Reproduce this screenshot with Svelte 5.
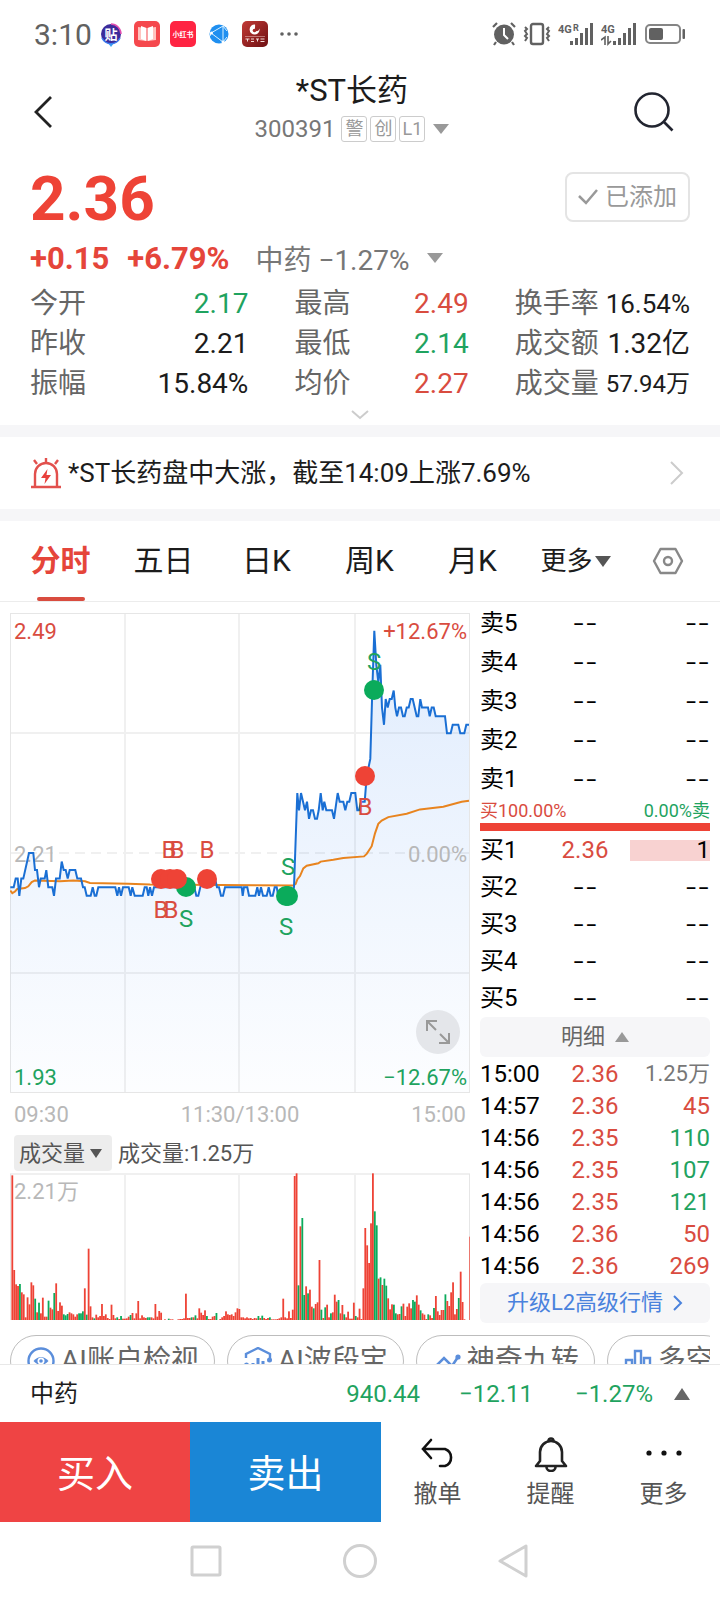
<script lang="ts">
  type Tone = "up" | "down" | "flat" | "muted";

  const stats: { label: string; value: string; tone: Tone; fit?: string }[] = [
    { label: "今开", value: "2.17", tone: "down" },
    { label: "最高", value: "2.49", tone: "up" },
    { label: "换手率", value: "16.54%", tone: "flat", fit: "fit" },
    { label: "昨收", value: "2.21", tone: "flat" },
    { label: "最低", value: "2.14", tone: "down" },
    { label: "成交额", value: "1.32亿", tone: "flat" },
    { label: "振幅", value: "15.84%", tone: "flat" },
    { label: "均价", value: "2.27", tone: "up" },
    { label: "成交量", value: "57.94万", tone: "flat", fit: "fit-more" },
  ];

  const tabs = ["分时", "五日", "日K", "周K", "月K"];
  let activeTab = $state("分时");

  const asks = ["卖5", "卖4", "卖3", "卖2", "卖1"];
  const bids = [
    { label: "买1", price: "2.36", volume: "1" },
    { label: "买2" },
    { label: "买3" },
    { label: "买4" },
    { label: "买5" },
  ];

  const trades: { time: string; price: string; volume: string; tone: Tone }[] = [
    { time: "15:00", price: "2.36", volume: "1.25万", tone: "muted" },
    { time: "14:57", price: "2.36", volume: "45", tone: "up" },
    { time: "14:56", price: "2.35", volume: "110", tone: "down" },
    { time: "14:56", price: "2.35", volume: "107", tone: "down" },
    { time: "14:56", price: "2.35", volume: "121", tone: "down" },
    { time: "14:56", price: "2.36", volume: "50", tone: "up" },
    { time: "14:56", price: "2.36", volume: "269", tone: "up" },
  ];

  // [tick, price in cents], three ticks to one chart unit
  const prices = [
    [1, 217], [11, 217], [17, 218], [23, 218], [28, 216], [34, 218], [40, 218], [57, 221], [70, 221],
    [75, 219], [81, 219], [87, 217], [92, 218], [104, 218], [109, 219], [115, 217], [127, 217],
    [132, 216], [138, 218], [149, 218], [155, 220], [161, 219], [167, 219], [173, 218], [179, 219],
    [196, 219], [202, 218], [213, 218], [219, 217], [224, 217], [230, 216], [242, 216], [248, 217],
    [254, 216], [259, 216], [265, 217], [316, 217], [322, 216], [327, 217], [333, 216], [339, 217],
    [356, 217], [362, 216], [367, 217], [374, 216], [398, 216], [404, 217], [410, 217], [415, 216],
    [420, 217], [426, 216], [432, 217], [553, 217], [559, 216], [565, 216], [571, 217], [581, 218],
    [615, 218], [621, 217], [627, 217], [633, 216], [639, 216], [645, 217], [695, 217], [698, 216],
    [702, 217], [712, 217], [717, 216], [736, 216], [742, 217], [747, 216], [753, 217], [759, 216],
    [770, 216], [776, 217], [782, 216], [788, 216], [794, 217], [800, 217], [805, 216], [845, 216],
    [852, 217], [862, 228], [867, 226], [873, 228], [885, 226], [891, 227], [897, 225], [903, 226],
    [909, 226], [915, 225], [921, 225], [926, 226], [932, 228], [938, 226], [943, 227], [949, 226],
    [966, 226], [972, 225], [983, 228], [989, 227], [1000, 227], [1006, 226], [1012, 227],
    [1018, 227], [1024, 228], [1036, 228], [1042, 226], [1047, 226], [1053, 227], [1064, 227],
    [1070, 230], [1081, 232], [1087, 240], [1093, 247], [1099, 243], [1105, 241], [1111, 243],
    [1116, 238], [1122, 236], [1127, 239], [1133, 238], [1139, 239], [1145, 239], [1151, 240],
    [1156, 238], [1161, 237], [1167, 238], [1173, 238], [1179, 237], [1184, 237], [1190, 238],
    [1196, 238], [1202, 239], [1208, 239], [1220, 237], [1225, 237], [1231, 239], [1236, 238],
    [1254, 238], [1259, 237], [1265, 238], [1271, 238], [1277, 237], [1305, 237], [1311, 235],
    [1322, 235], [1328, 236], [1345, 236], [1351, 235], [1363, 235], [1369, 236], [1377, 236],
  ];

  const averages = [
    [1, 216.6], [7, 216.3], [15, 216.5], [22, 216.8], [45, 216.9], [55, 217.1], [65, 217.6],
    [75, 217.8], [150, 217.7], [190, 217.8], [225, 217.7], [240, 217.5], [355, 217.4],
    [420, 217.3], [850, 217.2], [857, 217.4], [862, 217.9], [870, 218.3], [880, 219.2],
    [890, 219.5], [925, 219.8], [932, 220], [970, 220.2], [1000, 220.4], [1062, 220.6],
    [1070, 220.9], [1085, 221.8], [1095, 223.3], [1105, 224.4], [1115, 224.8], [1135, 225.2],
    [1190, 225.6], [1230, 226.1], [1300, 226.4], [1355, 227], [1377, 227.1],
  ];

  const toPoints = (series: number[][]) =>
    series
      .map(([t, p]) => `${(t / 3).toFixed(1)},${(240 - (p - 221) * 8.55).toFixed(1)}`)
      .join(" ");

  const priceLine = toPoints(prices);
  const averageLine = toPoints(averages);

  const dots = [
    { x: 176, y: 274, side: "sell" },
    { x: 151, y: 266, side: "buy" },
    { x: 160, y: 266, side: "buy" },
    { x: 167, y: 266, side: "buy" },
    { x: 197, y: 266, side: "buy" },
    { x: 276, y: 283, side: "sell" },
    { x: 278, y: 283, side: "sell" },
    { x: 355, y: 163, side: "buy" },
    { x: 364, y: 77, side: "sell" },
  ];

  const marks = [
    { x: 159, y: 245, text: "B" },
    { x: 167, y: 245, text: "B" },
    { x: 197, y: 245, text: "B" },
    { x: 151, y: 305, text: "B" },
    { x: 161, y: 305, text: "B" },
    { x: 176, y: 314, text: "S" },
    { x: 278, y: 262, text: "S" },
    { x: 276, y: 322, text: "S" },
    { x: 355, y: 202, text: "B" },
    { x: 364, y: 57, text: "S" },
  ];

  // one bar a minute, negative for a falling minute
  const volumes = [
    434, 150, 107, 102, -108, 83, 77, 8, 68, 47, 113, 104, -64, 23, -52, 20, 67, 10, 10, -58,
    37, 32, -81, 110, 27, 53, 43, -17, -14, -18, 23, 20, 17, 10, 17, -20, -20, -26, 95, -16,
    214, 41, 8, -5, 16, 8, 12, 48, 12, 17, 6, 3, 46, 15, 5, -8, 3, -12, 4, 4,
    5, 10, -15, 21, 5, 20, 57, 5, 14, 8, 6, -8, -8, 8, 5, 48, 10, 27, 22, 0,
    2, 0, -4, 2, 2, 0, 0, 2, 3, 3, 5, 79, 6, 6, -8, 8, -14, 5, 35, 22,
    15, 29, -12, 3, 3, 10, 12, -21, 0, 3, 8, 12, 26, 17, 15, 17, 12, 23, 35, 33,
    8, 8, 5, 8, 5, 6, 3, 6, 5, -12, 6, -13, 6, 3, 6, -8, 2, 2, 2, 3,
    5, 8, 64, 8, 5, 26, 6, 31, 432, 440, -104, 281, -306, -75, 101, -80, 91, 40, -35, 48,
    53, 180, -31, 6, -38, 46, 8, -20, 23, 76, 55, -60, 20, 45, -17, 8, 25, 4, 4, 52,
    -12, 8, 34, 3, 95, 276, 224, 171, 290, 440, -326, -284, 124, -128, 105, -124, -103, 65, 32, 47,
    -46, -20, 17, 18, -41, 49, 12, 40, 50, 35, -60, -55, 74, 46, -29, 20, 16, 3, -17, 14,
    6, -36, 72, 26, 15, 30, 30, -77, 57, 42, 83, 113, 17, 33, -66, 145, 54, 2, 0, 0,
    250,
  ];
</script>

<div class="page">
  <div class="status">
    <span class="clock">3:10</span>
    <svg class="app first" viewBox="0 0 26 26" aria-hidden="true">
      <path d="M13 26l-3-4h6z" fill="#39a5f5" />
      <circle cx="13" cy="13" r="10" fill="#3c2c9b" />
      <path d="M13 3a10 10 0 0 1 10 10" stroke="#e14fb0" stroke-width="1.5" fill="none" />
      <path d="M4 17a10 10 0 0 0 18 0" stroke="#3c7df0" stroke-width="1.5" fill="none" />
      <text x="13" y="18" font-size="13" font-weight="700" text-anchor="middle" fill="#fff">贴</text>
    </svg>
    <svg class="app" viewBox="0 0 26 26" aria-hidden="true">
      <rect width="26" height="26" rx="5" fill="#f5484d" />
      <path d="M4 6l8 1v13l-8-1zM22 6l-8 1v13l8-1z" fill="#ffc4c0" />
      <path d="M7 5l5.500 2v13L7 18zM19 5l-5.500 2v13L19 18z" fill="#fff" />
    </svg>
    <svg class="app" viewBox="0 0 26 26" aria-hidden="true">
      <rect width="26" height="26" rx="5" fill="#ff2442" />
      <text x="13" y="16" font-size="7" font-weight="700" text-anchor="middle" fill="#fff">小红书</text>
    </svg>
    <svg class="app" viewBox="0 0 26 26" aria-hidden="true">
      <circle cx="13" cy="13" r="9.500" fill="#1f8ff0" />
      <path d="M5 12l12-7M5 12l12 9M17 5v16M5 12l-1 3M17 5l4 5M17 21l4-5" stroke="#d9f1ff" fill="none" />
      <circle cx="5.500" cy="12" r="1.500" fill="#fff" />
      <circle cx="17" cy="21" r="1.500" fill="#fff" />
    </svg>
    <svg class="app" viewBox="0 0 26 26" aria-hidden="true">
      <defs>
        <linearGradient id="broker" x1="0" y1="0" x2="1" y2="1">
          <stop offset="0" stop-color="#c23a36" />
          <stop offset="1" stop-color="#6d0f12" />
        </linearGradient>
      </defs>
      <rect width="26" height="26" rx="5" fill="url(#broker)" />
      <path d="M13 3.500a5 5 0 1 0 4.500 4c-.5 2-2 3-3.500 2.500-2-1-.5-4-1-6.500z" fill="#fff" />
      <circle cx="12.500" cy="9.500" r="1.800" fill="#a52a28" />
      <path d="M3 15.500h20" stroke="#f0c9c6" stroke-width=".5" />
      <path d="M3.500 18h4M5.500 18v2.500M9 18h3M9 20.500h3M14 18h3M15.500 18v2.500M18.500 18h4M18.500 20.500h4" stroke="#f3dcda" />
    </svg>
    <svg class="more-dots" viewBox="0 0 18 4" aria-hidden="true">
      <circle cx="2" cy="2" r="1.800" /><circle cx="9" cy="2" r="1.800" /><circle cx="16" cy="2" r="1.800" />
    </svg>

    <svg class="sys" width="24" height="24" viewBox="0 0 24 24" aria-hidden="true">
      <circle cx="12" cy="12.500" r="10" />
      <path d="M1 5l4-4M23 5l-4-4M4 20l-2 3M20 20l2 3" stroke="#616161" stroke-width="2.200" />
      <path d="M12 6v7l4 4" stroke="#fff" stroke-width="2" fill="none" />
    </svg>
    <svg class="sys" width="28" height="24" viewBox="0 0 28 24" aria-hidden="true">
      <rect x="8" y="2" width="12" height="20" rx="2" fill="none" stroke="#616161" stroke-width="2.400" />
      <path d="M2 5l2 2-2 2 2 3-2 2 2 2-2 3M26 5l-2 2 2 2-2 3 2 2-2 2 2 3" fill="none" stroke="#616161" stroke-width="2" />
    </svg>
    <svg class="sys" width="36" height="24" viewBox="0 0 36 24" aria-hidden="true">
      <text x="0" y="11" font-size="11" font-weight="700">4G</text>
      <text x="15" y="9" font-size="9" font-weight="700">R</text>
      <path d="M13.500 19v4M18.500 16v7M23.500 11v12M28.500 6v17M33.500 1v22" stroke="#616161" stroke-width="3" />
    </svg>
    <svg class="sys" width="36" height="24" viewBox="0 0 36 24" aria-hidden="true">
      <text x="0" y="11" font-size="11" font-weight="700">4G</text>
      <path d="M0 18l4-3v8M7 14v8l3-3" stroke="#616161" stroke-width="1.600" fill="none" />
      <path d="M13.500 19v4M18.500 16v7M23.500 11v12M28.500 6v17M33.500 1v22" stroke="#616161" stroke-width="3" />
    </svg>
    <svg class="sys" width="42" height="22" viewBox="0 0 42 22" aria-hidden="true">
      <rect x="2" y="2" width="34" height="18" rx="4" fill="none" stroke="#858585" stroke-width="2" />
      <rect x="5" y="5" width="14" height="12" rx="2" />
      <rect x="38.500" y="6" width="2.500" height="10" rx="1" />
    </svg>
  </div>

  <header>
    <button type="button" class="icon-button" aria-label="返回">
      <svg width="20" height="34" viewBox="0 0 20 34">
        <path d="M17 2L2 17l15 15" fill="none" stroke="#222" stroke-width="2.800" />
      </svg>
    </button>
    <div class="title">
      <h1>*ST长药</h1>
      <div class="code">
        <span>300391</span>
        <span class="tags"><i>警</i><i>创</i><i>L1</i></span>
        <svg width="16" height="10" viewBox="0 0 16 10"><path d="M0 0h16L8 10z" fill="#999" /></svg>
      </div>
    </div>
    <button type="button" class="icon-button right" aria-label="搜索">
      <svg width="40" height="40" viewBox="0 0 40 40">
        <g fill="none" stroke="#222530" stroke-width="2.600">
          <circle cx="18" cy="18" r="16.500" />
          <path d="M29.500 29.500l9 9" />
        </g>
      </svg>
    </button>
  </header>

  <section class="summary">
    <div class="price-row">
      <strong>2.36</strong>
      <button type="button" class="added">
        <svg width="20" height="16" viewBox="0 0 20 16">
          <path d="M1 7l7 7L19 1" fill="none" stroke="#999" stroke-width="2.500" />
        </svg>
        已添加
      </button>
    </div>
    <div class="change-row">
      <b>+0.15</b>
      <b>+6.79%</b>
      <span class="sector">中药 −1.27%</span>
      <svg width="16" height="10" viewBox="0 0 16 10"><path d="M0 0h16L8 10z" fill="#999" /></svg>
    </div>
    <dl>
      {#each stats as stat}
        <div>
          <dt>{stat.label}</dt>
          <dd class="{stat.tone} {stat.fit ?? ''}">{stat.value}</dd>
        </div>
      {/each}
    </dl>
    <button type="button" class="expand" aria-label="展开">
      <svg width="18" height="10" viewBox="0 0 18 10">
        <path d="M1 1l8 7 8-7" fill="none" stroke="#ccc" stroke-width="2" />
      </svg>
    </button>
  </section>

  <a class="alert" href="#news">
    <svg width="32" height="32" viewBox="0 0 32 32">
      <g fill="none" stroke="#e2504d" stroke-width="2.400">
        <path d="M5 29V17a11 11 0 0 1 22 0v12" />
        <path d="M1 30h30M16 1v4M4 3l3 4M28 3l-3 4" />
      </g>
      <path d="M17.500 12l-6.500 9h4.500l-1 6 6.500-9h-4.500z" fill="#e8403c" />
    </svg>
    <span>*ST长药盘中大涨，截至14:09上涨7.69%</span>
    <svg width="14" height="24" viewBox="0 0 14 24">
      <path d="M1 1l11 11L1 23" fill="none" stroke="#ccc" stroke-width="2" />
    </svg>
  </a>

  <nav class="tabs">
    {#each tabs as tab}
      <button
        type="button"
        class={activeTab === tab ? "active" : ""}
        onclick={() => (activeTab = tab)}
      >
        {tab}
      </button>
    {/each}
    <button type="button" class="more">
      更多
      <svg width="16" height="11" viewBox="0 0 16 11"><path d="M0 0h16L8 11z" fill="#555" /></svg>
    </button>
    <button type="button" aria-label="设置">
      <svg width="32" height="28" viewBox="0 0 32 28">
        <g fill="none" stroke="#888" stroke-width="2.400">
          <path d="M8.500 2h15L30 14l-6.500 12h-15L2 14z" stroke-linejoin="round" />
          <circle cx="16" cy="14" r="4" />
        </g>
      </svg>
    </button>
  </nav>

  <main>
    <div class="charts">
      <div class="price-chart">
        <svg viewBox="0 0 460 480" role="img" aria-label="分时图">
          <defs>
            <linearGradient id="fill" gradientUnits="userSpaceOnUse" x1="0" y1="0" x2="0" y2="480">
              <stop offset="0" stop-color="#1a73f0" stop-opacity=".14" />
              <stop offset=".7" stop-color="#1a73f0" stop-opacity=".05" />
              <stop offset="1" stop-color="#1a73f0" stop-opacity=".012" />
            </linearGradient>
          </defs>
          <g fill="none" stroke="#f0f0f0" stroke-width="2">
            <rect x=".5" y=".5" width="459" height="479" stroke="#e6e6e6" stroke-width="1" />
            <path d="M115 1v478M229 1v478M345 1v478M1 120h458M1 360h458" />
            <path d="M1 240h458" stroke-dasharray="10 6" />
          </g>
          <polygon points="{priceLine} 459,479 0,479" fill="url(#fill)" />
          <text class="up" x="4" y="26">2.49</text>
          <text class="up" x="457" y="26" text-anchor="end">+12.67%</text>
          <text class="axis" x="4" y="249">2.21</text>
          <text class="axis" x="457" y="249" text-anchor="end">0.00%</text>
          <text class="down" x="4" y="472">1.93</text>
          <text class="down" x="457" y="472" text-anchor="end">−12.67%</text>
          <polyline points={averageLine} fill="none" stroke="#e8841f" stroke-width="2" />
          <polyline points={priceLine} fill="none" stroke="#1a6fd4" stroke-width="2" />
          {#each dots as dot}
            <circle class={dot.side} cx={dot.x} cy={dot.y} r="10" />
          {/each}
          {#each marks as mark}
            <text class="mark {mark.text === 'B' ? 'up' : 'down'}" x={mark.x} y={mark.y}>{mark.text}</text>
          {/each}
        </svg>
        <button type="button" class="fullscreen" aria-label="全屏">
          <svg width="24" height="24" viewBox="0 0 24 24">
            <path d="M1 11V1h10M1 1l9 9M23 13v10H13M23 23l-9-9" fill="none" stroke="#999" stroke-width="2" />
          </svg>
        </button>
      </div>
      <div class="times">
        <span>09:30</span>
        <span>11:30/13:00</span>
        <span>15:00</span>
      </div>
      <div class="indicator">
        <div class="picker">
          <select aria-label="指标">
            <option>成交量</option>
          </select>
          <svg width="12" height="9" viewBox="0 0 12 9"><path d="M0 0h12L6 9z" fill="#555" /></svg>
        </div>
        <span>成交量:1.25万</span>
      </div>
      <svg viewBox="0 0 460 148" role="img" aria-label="成交量图">
        <g fill="none" stroke="#f0f0f0" stroke-width="2">
          <path d="M0 1h460M115 1v146M229 1v146M345 1v146" />
          <path d="M.5 1v146M459.500 1v146" stroke="#e6e6e6" stroke-width="1" />
        </g>
        {#each volumes as v, i}
          <rect
            class={v < 0 ? "sell" : "buy"}
            x={i * 1.908 + 1.4}
            y={147 - Math.abs(v) / 3}
            width="1.800"
            height={Math.abs(v) / 3}
          />
        {/each}
        <text class="axis" x="4" y="26">2.21万</text>
      </svg>
    </div>

    <div class="book">
      <table class="asks">
        <tbody>
          {#each asks as ask}
            <tr><th>{ask}</th><td class="dash">--</td><td class="dash">--</td></tr>
          {/each}
        </tbody>
      </table>
      <div class="ratio">
        <span class="up">买100.00%</span>
        <span class="down">0.00%卖</span>
      </div>
      <div class="ratio-bar"></div>
      <table class="bids">
        <tbody>
          {#each bids as bid}
            <tr>
              <th>{bid.label}</th>
              {#if bid.price}
                <td class="up">{bid.price}</td>
                <td><span class="depth">{bid.volume}</span></td>
              {:else}
                <td class="dash">--</td>
                <td class="dash">--</td>
              {/if}
            </tr>
          {/each}
        </tbody>
      </table>
      <button type="button" class="panel">
        明细
        <svg width="14" height="10" viewBox="0 0 14 10"><path d="M0 10h14L7 0z" fill="#999" /></svg>
      </button>
      <table class="trades">
        <tbody>
          {#each trades as trade}
            <tr>
              <th>{trade.time}</th>
              <td class="up">{trade.price}</td>
              <td class={trade.tone}>{trade.volume}</td>
            </tr>
          {/each}
        </tbody>
      </table>
      <a class="panel link" href="#level2">
        升级L2高级行情
        <svg width="10" height="16" viewBox="0 0 10 16">
          <path d="M1 1l7 7-7 7" fill="none" stroke="#4a82dd" stroke-width="2" />
        </svg>
      </a>
    </div>
  </main>

  <div class="tools">
    <button type="button">
      <svg width="28" height="28" viewBox="0 0 28 28">
        <circle cx="14" cy="14" r="12.500" fill="none" stroke="#5b8edb" stroke-width="2.400" />
        <path d="M6.500 14q7.500-8 15 0-7.500 8-15 0z" fill="#5b8edb" />
        <circle cx="14" cy="14" r="3.500" fill="#fff" /><circle cx="14" cy="14" r="1.800" fill="#5b8edb" />
      </svg>
      AI账户检视
    </button>
    <button type="button">
      <svg width="28" height="28" viewBox="0 0 28 28">
        <g fill="none" stroke="#5b8edb" stroke-width="2.400">
          <path d="M2 11V7l12-6 12 6v6M2 18v3l12 6 12-6" />
          <path d="M9 21v-5M14 21V11M19 21v-7" stroke-width="3" />
        </g>
        <circle cx="25.500" cy="13" r="2.500" fill="#5b8edb" /><circle cx="2.500" cy="18" r="2.500" fill="#5b8edb" />
      </svg>
      AI波段宝
    </button>
    <button type="button">
      <svg width="28" height="28" viewBox="0 0 28 28">
        <path d="M2 20l9-9 8 8 6-9" fill="none" stroke="#5b8edb" stroke-width="2.600" />
        <circle cx="25" cy="10" r="2.600" fill="#5b8edb" />
      </svg>
      神奇九转
    </button>
    <button type="button">
      <svg width="28" height="28" viewBox="0 0 28 28">
        <path d="M2 26V13h6v13M11 26V4h6v22M20 26V11h6v15M1 26h26" fill="none" stroke="#5b8edb" stroke-width="2.400" />
      </svg>
      多空
    </button>
  </div>

  <div class="index">
    <span>中药</span>
    <span class="down">940.44</span>
    <span class="down">−12.11</span>
    <span class="down">−1.27%</span>
    <svg width="16" height="12" viewBox="0 0 16 12"><path d="M0 12h16L8 0z" fill="#666" /></svg>
  </div>

  <div class="actions">
    <button type="button" class="trade buy-button">买入</button>
    <button type="button" class="trade sell-button">卖出</button>
    <button type="button">
      <svg width="36" height="36" viewBox="0 0 36 36">
        <path d="M11 4L3 13l8 9M3 13h22a9 9 0 0 1 0 17h-5" fill="none" stroke="#111" stroke-width="2.600" stroke-linecap="round" />
      </svg>
      撤单
    </button>
    <button type="button">
      <svg width="36" height="36" viewBox="0 0 36 36">
        <g fill="none" stroke="#222" stroke-width="2.600" stroke-linejoin="round">
          <path d="M7 25V16a11 11 0 0 1 22 0v9l4 5H3z" />
          <path d="M15.500 5a2.500 2.500 0 0 1 5 0M13.500 31a4.500 4 0 0 0 9 0" />
        </g>
      </svg>
      提醒
    </button>
    <button type="button">
      <svg width="36" height="36" viewBox="0 0 36 36">
        <circle cx="3" cy="17" r="2.600" /><circle cx="18" cy="17" r="2.600" /><circle cx="33" cy="17" r="2.600" />
      </svg>
      更多
    </button>
  </div>

  <div class="system-nav">
    <button type="button" aria-label="最近任务">
      <svg width="34" height="34" viewBox="0 0 34 34"><rect x="3" y="3" width="28" height="28" rx="1" /></svg>
    </button>
    <button type="button" aria-label="主屏幕">
      <svg width="34" height="34" viewBox="0 0 34 34"><circle cx="17" cy="17" r="15.500" /></svg>
    </button>
    <button type="button" aria-label="后退">
      <svg width="34" height="34" viewBox="0 0 34 34"><path d="M29 2v30L3 17z" stroke-linejoin="round" /></svg>
    </button>
  </div>
</div>

<style>
  :global(body) {
    background: #fff;
  }

  .page {
    --red: #d94c3f;
    --green: #1fa35f;
    font-family: Roboto, "Noto Sans CJK SC", sans-serif;
    font-size: 24px;
    color: #1c1c1c;
    overflow: hidden;
  }

  button {
    margin: 0;
    padding: 0;
    border: 0;
    background: none;
    font: inherit;
    color: inherit;
  }

  a {
    color: inherit;
    text-decoration: none;
  }

  svg {
    display: block;
    flex: none;
  }

  .up {
    color: var(--red);
    fill: var(--red);
  }

  .down {
    color: var(--green);
    fill: var(--green);
  }

  .flat {
    color: #1c1c1c;
  }

  .muted {
    font-size: 22px;
    color: #777;
  }

  .buy {
    fill: #ee4336;
  }

  .sell {
    fill: #0bab5b;
  }

  .status {
    display: flex;
    align-items: center;
    height: 68px;
    padding: 0 34px;
    color: #616161;
    fill: #616161;
  }

  .clock {
    font-size: 30px;
  }

  .app {
    width: 26px;
    height: 26px;
    margin-left: 10px;
  }

  .app.first {
    margin-left: 6px;
  }

  .more-dots {
    width: 18px;
    margin: 0 auto 0 12px;
  }

  .sys {
    margin-left: 7px;
  }

  header {
    display: grid;
    grid-template-columns: 60px 1fr 78px;
    align-items: center;
    height: 88px;
    padding: 0 32px 0 34px;
  }

  .icon-button.right {
    justify-self: end;
    margin-right: 14px;
  }

  .title {
    padding-bottom: 8px;
    text-align: center;
  }

  h1 {
    margin: 0;
    font-size: 31px;
    font-weight: 400;
    line-height: 42px;
  }

  .code {
    display: flex;
    align-items: center;
    justify-content: center;
    line-height: 34px;
    color: #777;
  }

  .tags {
    display: flex;
    gap: 3px;
    margin: 0 8px 0 6px;
  }

  .tags i {
    width: 24px;
    border: 1px solid #ccc;
    border-radius: 3px;
    font-size: 18px;
    font-style: normal;
    line-height: 24px;
    color: #999;
  }

  .summary {
    padding: 16px 30px 0;
    border-bottom: 12px solid #f6f6f8;
  }

  .price-row {
    display: flex;
    align-items: center;
    justify-content: space-between;
    height: 50px;
  }

  .price-row strong {
    padding-top: 4px;
    font-size: 62px;
    line-height: 50px;
    color: #ee4336;
  }

  .added {
    display: flex;
    align-items: center;
    gap: 7px;
    height: 50px;
    padding: 0 11px;
    border: 2px solid #e4e4e4;
    border-radius: 8px;
    line-height: 32px;
    color: #999;
  }

  .change-row {
    display: flex;
    align-items: center;
    gap: 18px;
    height: 72px;
    font-size: 28px;
    color: #777;
  }

  .change-row b {
    font-size: 31px;
    color: #e5453a;
  }

  .sector {
    margin-left: 8px;
  }

  dl {
    display: grid;
    grid-template-columns: 218fr 174fr 175fr;
    column-gap: 46px;
    margin: -10px 0 0;
    font-size: 28px;
    line-height: 40px;
  }

  dl div {
    display: flex;
    justify-content: space-between;
    white-space: nowrap;
  }

  dt {
    color: #666;
  }

  dd {
    margin: 0;
  }

  .fit {
    font-size: 26px;
  }

  .fit-more {
    font-size: 24px;
  }

  .expand {
    display: block;
    margin: 0 auto;
    padding: 6px 20px 5px;
  }

  .alert {
    display: flex;
    align-items: center;
    gap: 6px;
    height: 72px;
    padding: 0 36px 0 30px;
    border-bottom: 12px solid #f6f6f8;
    font-size: 26px;
    line-height: 36px;
  }

  .alert span {
    flex: 1;
  }

  .tabs {
    display: grid;
    grid-template-columns: repeat(6, 103fr) 82fr;
    height: 80px;
    padding: 0 11px 0 9px;
    border-bottom: 1px solid #ececec;
    font-size: 30px;
    line-height: 40px;
  }

  .tabs button {
    display: flex;
    align-items: center;
    justify-content: center;
    position: relative;
  }

  .tabs .active {
    font-weight: 700;
    color: #e5453a;
  }

  .tabs .active::after {
    content: "";
    position: absolute;
    bottom: 0;
    left: 50%;
    width: 48px;
    height: 4px;
    margin-left: -24px;
    border-radius: 2px;
    background: var(--red);
  }

  .tabs .more {
    gap: 2px;
    font-size: 26px;
  }

  main {
    display: grid;
    grid-template-columns: 460fr 230fr;
    gap: 10px;
    padding: 0 10px;
  }

  .charts {
    min-width: 0;
    padding-top: 11px;
    font-size: 22px;
  }

  .charts > svg,
  .price-chart > svg {
    width: 100%;
  }

  .price-chart {
    position: relative;
  }

  .axis {
    fill: #b8b8b8;
  }

  .mark {
    font-size: 24px;
    text-anchor: middle;
  }

  .fullscreen {
    position: absolute;
    right: 10px;
    bottom: 39px;
    display: flex;
    align-items: center;
    justify-content: center;
    width: 44px;
    height: 44px;
    border-radius: 50%;
    background: #e4e6ea;
  }

  .times {
    display: flex;
    justify-content: space-between;
    height: 42px;
    padding: 0 4px;
    line-height: 44px;
    color: #b8b8b8;
  }

  .indicator {
    display: flex;
    gap: 6px;
    height: 36px;
    margin: 0 0 2px 4px;
    line-height: 38px;
    color: #555;
  }

  .picker {
    display: grid;
    align-items: center;
    width: 98px;
    border-radius: 4px;
    background: #ededed;
  }

  .picker select {
    grid-area: 1 / 1;
    width: 100%;
    height: 36px;
    padding: 0 0 0 5px;
    border: 0;
    background: none;
    appearance: none;
    font: inherit;
    color: inherit;
  }

  .picker svg {
    grid-area: 1 / 1;
    justify-self: end;
    margin-right: 10px;
    pointer-events: none;
  }

  .book {
    padding-top: 2px;
    color: #000;
  }

  table {
    width: 100%;
    table-layout: fixed;
    border-collapse: collapse;
  }

  th,
  td {
    padding: 0;
    font-weight: 400;
    text-align: right;
    white-space: nowrap;
  }

  th {
    width: 60px;
    text-align: left;
  }

  td:nth-child(2) {
    width: 90px;
    text-align: center;
  }

  .dash {
    font-family: Inter, sans-serif;
    font-size: 28px;
    font-weight: 300;
  }

  .asks tr {
    height: 39px;
    line-height: 39px;
  }

  .bids {
    margin-top: 1px;
  }

  .bids tr {
    height: 37px;
    line-height: 37px;
  }

  .trades {
    margin: 1px 0;
  }

  .trades tr {
    height: 32px;
    line-height: 32px;
  }

  .trades th {
    width: 80px;
  }

  .trades td:nth-child(2) {
    width: 70px;
  }

  .depth {
    display: block;
    line-height: 21px;
    background: #f8d2d1;
  }

  .ratio {
    display: flex;
    justify-content: space-between;
    font-size: 18px;
    line-height: 24px;
  }

  .ratio-bar {
    height: 8px;
    background: #ee4336;
  }

  .panel {
    display: flex;
    align-items: center;
    justify-content: center;
    gap: 10px;
    width: 100%;
    height: 40px;
    border-radius: 6px;
    background: #f6f6f8;
    font-size: 22px;
    line-height: 32px;
    color: #666;
  }

  .panel.link {
    color: #4a82dd;
  }

  .tools {
    display: flex;
    gap: 12px;
    height: 29px;
    margin: 0 10px;
    padding-top: 12px;
    overflow: hidden;
  }

  .tools button {
    display: flex;
    flex: none;
    align-items: center;
    gap: 6px;
    height: 52px;
    padding: 0 15px 0 16px;
    border: 1px solid #bdbdbd;
    border-radius: 26px;
    font-size: 28px;
    line-height: 40px;
    color: #666;
  }

  .index {
    display: grid;
    grid-template-columns: 1fr auto 113px 120px 37px;
    align-items: center;
    height: 57px;
    padding: 0 30px;
    border-top: 1px solid #e8e8e8;
    line-height: 58px;
    text-align: right;
  }

  .index span:first-child {
    text-align: left;
  }

  .index svg {
    justify-self: end;
  }

  .actions {
    display: grid;
    grid-template-columns: 190fr 191fr 113fr 113fr 113fr;
    height: 100px;
    color: #555;
  }

  .actions button {
    display: flex;
    flex-direction: column;
    align-items: center;
    justify-content: center;
    gap: 4px;
    padding-top: 4px;
    line-height: 36px;
  }

  .actions .trade {
    font-size: 38px;
    color: #fff;
  }

  .buy-button {
    background: #ef4444;
  }

  .sell-button {
    background: #1a86d6;
  }

  .actions svg {
    fill: #111;
  }

  .system-nav {
    display: flex;
    align-items: center;
    justify-content: center;
    gap: 120px;
    height: 77px;
  }

  .system-nav svg {
    fill: none;
    stroke: #d0d0d0;
    stroke-width: 3;
  }
</style>
